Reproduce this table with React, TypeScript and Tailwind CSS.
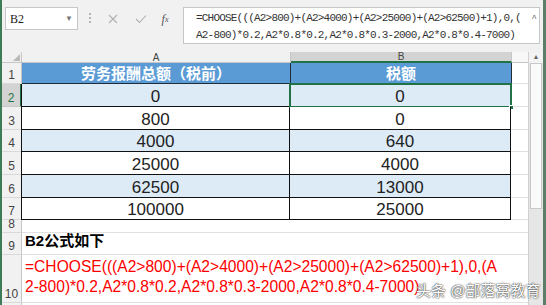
import React from 'react'

const rows = [
  { n: '2', a: '0', b: '0', shade: true },
  { n: '3', a: '800', b: '0', shade: false },
  { n: '4', a: '4000', b: '640', shade: true },
  { n: '5', a: '25000', b: '4000', shade: false },
  { n: '6', a: '62500', b: '13000', shade: true },
  { n: '7', a: '100000', b: '25000', shade: false },
]

const heights: Record<string, string> = {
  '2': 'h-[23px]',
  '3': 'h-[23px]',
  '4': 'h-[22px]',
  '5': 'h-[23px]',
  '6': 'h-[23px]',
  '7': 'h-[22px]',
}

function RowHead({ n, selected }: { n: string; selected?: boolean }) {
  return (
    <div
      className={
        selected
          ? 'w-[20px] shrink-0 flex items-end justify-center pb-[1px] bg-[#d3d3d3] border-r-2 border-r-[#217346] border-b border-b-[#c6c6c6] text-[12px] leading-[14px] text-[#217346]'
          : 'w-[20px] shrink-0 flex items-end justify-center pb-[1px] bg-[#f1f1f1] border-r border-r-[#c6c6c6] border-b border-b-[#d9d9d9] text-[12px] leading-[14px] text-[#444]'
      }
    >
      {n}
    </div>
  )
}

export default function App() {
  return (
    <div className="w-[546px] h-[305px] overflow-hidden flex bg-[#f1f1f1] font-['Liberation_Sans','Noto_Sans_CJK_SC',sans-serif]">
      <div className="w-[2px] shrink-0 bg-[#3f7b57]" />

      <div className="flex-1 flex flex-col min-w-0">
        {/* formula bar */}
        <div className="h-[52px] shrink-0 flex items-start pt-[7px]">
          <div className="ml-[3px] w-[73px] h-[23px] bg-white border border-[#c6c6c6] flex items-center justify-between pl-[4px] pr-[4px]">
            <span className="text-[12px] font-['Liberation_Serif','Noto_Sans_CJK_SC',serif] text-[#222]">B2</span>
            <span className="text-[8px] text-[#777]">▼</span>
          </div>
          <div className="ml-[10px] mt-[6px] w-[4px] flex flex-col items-center gap-[2px]">
            <span className="w-[2px] h-[2px] bg-[#b5b5b5]" />
            <span className="w-[2px] h-[2px] bg-[#b5b5b5]" />
            <span className="w-[2px] h-[2px] bg-[#b5b5b5]" />
          </div>
          <div className="ml-[7px] w-[28px] h-[23px] flex items-center justify-center text-[#b0b0b0]">
            <svg width="10" height="10" viewBox="0 0 10 10">
              <path d="M1 1 L9 9 M9 1 L1 9" stroke="currentColor" strokeWidth="1.1" />
            </svg>
          </div>
          <div className="w-[28px] h-[23px] flex items-center justify-center text-[#b0b0b0]">
            <svg width="12" height="10" viewBox="0 0 12 10">
              <path d="M1 5 L4.5 8.5 L11 1.5" stroke="currentColor" strokeWidth="1.1" fill="none" />
            </svg>
          </div>
          <div className="w-[20px] h-[23px] flex items-center justify-center text-[12px] italic font-['Liberation_Serif',serif] text-[#555]">
            f<span className="text-[8px] mt-[3px]">x</span>
          </div>
          <div className="ml-[8px] w-[357px] h-[37px] bg-white border border-[#c6c6c6] relative pl-[12px] pt-[2px] font-['Liberation_Mono','Noto_Sans_CJK_SC',monospace] text-[11px] leading-[17px] tracking-[-0.8px] text-[#333]">
            <div className="whitespace-nowrap">=CHOOSE(((A2&gt;800)+(A2&gt;4000)+(A2&gt;25000)+(A2&gt;62500)+1),0,(</div>
            <div className="whitespace-nowrap">A2-800)*0.2,A2*0.8*0.2,A2*0.8*0.3-2000,A2*0.8*0.4-7000)</div>
            <span className="absolute right-[3px] top-[3px] text-[9px] text-[#666]">^</span>
          </div>
        </div>

        {/* sheet */}
        <div className="flex-1 flex min-h-0 relative">
          <div className="flex-1 flex flex-col bg-white">
            {/* column headers */}
            <div className="h-[11px] flex shrink-0 bg-[#f1f1f1]">
              <div className="w-[20px] shrink-0 border-r border-b border-[#c6c6c6] flex items-end justify-end">
                <div className="w-0 h-0 border-l-[7px] border-l-transparent border-b-[7px] border-b-[#b9b9b9] mr-[1px] mb-[1px]" />
              </div>
              <div className="w-[269px] shrink-0 border-r border-b border-[#c6c6c6] flex items-center justify-center text-[10px] text-[#444]">A</div>
              <div className="w-[221px] shrink-0 bg-[#d3d3d3] border-r border-[#c6c6c6] border-b-2 border-b-[#217346] flex items-center justify-center text-[10px] text-[#444]">B</div>
              <div className="flex-1 bg-[#f7f7f7] border-b border-[#c6c6c6]" />
            </div>

            {/* row 1 */}
            <div className="h-[21px] flex shrink-0">
              <RowHead n="1" />
              <div className="w-[269px] shrink-0 bg-[#5b9bd5] border-r border-b border-[#1f2d3a] flex items-center justify-center pt-[2px] text-[15px] font-bold text-white">
                劳务报酬总额（税前）
              </div>
              <div className="w-[221px] shrink-0 bg-[#5b9bd5] border-r border-b border-[#1f2d3a] flex items-center justify-center pt-[2px] text-[15px] font-bold text-white">
                税额
              </div>
              <div className="flex-1 border-b border-[#e1e1e1]" />
            </div>

            {rows.map((r) => (
              <div key={r.n} className={`${heights[r.n]} flex shrink-0`}>
                <RowHead n={r.n} selected={r.n === '2'} />
                <div
                  className={`w-[269px] shrink-0 border-l border-r border-b border-[#111] -ml-[1px] flex items-center justify-center pt-[3px] text-[17px] text-[#222] ${r.shade ? 'bg-[#ddebf7]' : 'bg-white'}`}
                >
                  {r.a}
                </div>
                <div
                  className={`w-[221px] shrink-0 border-r border-b border-[#111] flex items-center justify-center pt-[3px] text-[17px] text-[#222] relative ${r.shade ? 'bg-[#ddebf7]' : 'bg-white'}`}
                >
                  {r.b}
                  {r.n === '2' && (
                    <>
                      <div className="absolute left-[-1px] right-[-2px] top-[-1px] bottom-[-2px] border-2 border-[#217346]" />
                      <div className="absolute right-[-4px] bottom-[-4px] w-[5px] h-[5px] bg-[#217346] border border-white" />
                    </>
                  )}
                </div>
                <div className="flex-1 border-b border-[#e1e1e1]" />
              </div>
            ))}

            {/* row 8 */}
            <div className="h-[13px] flex shrink-0">
              <RowHead n="8" />
              <div className="flex-1 border-b border-[#e1e1e1]" />
            </div>

            {/* row 9 */}
            <div className="h-[22px] flex shrink-0">
              <RowHead n="9" />
              <div className="flex-1 flex items-end pl-[3px] pb-[2px] border-b border-[#e1e1e1] text-[15px] font-bold text-black">
                B2公式如下
              </div>
            </div>

            {/* row 10 */}
            <div className="h-[48px] flex shrink-0">
              <RowHead n="10" />
              <div className="flex-1 pl-[3px] pt-[2px] text-[15.6px] leading-[20px] text-[#ff0000] border-b border-[#e1e1e1]">
                <div className="whitespace-nowrap">=CHOOSE(((A2&gt;800)+(A2&gt;4000)+(A2&gt;25000)+(A2&gt;62500)+1),0,(A</div>
                <div className="whitespace-nowrap">2-800)*0.2,A2*0.8*0.2,A2*0.8*0.3-2000,A2*0.8*0.4-7000)</div>
              </div>
            </div>
            <div className="flex-1 flex">
              <div className="w-[20px] bg-[#f1f1f1] border-r border-[#c6c6c6]" />
            </div>
          </div>

          {/* vertical scrollbar */}
          <div className="w-[15px] shrink-0 bg-[#e6e6e6] border-l border-[#d0d0d0] flex flex-col">
            <div className="h-[11px] flex items-center justify-center text-[7px] text-[#666] bg-[#f3f3f3]">▲</div>
            <div className="mx-[1px] h-[146px] bg-[#fafafa] border border-[#c8c8c8]" />
          </div>

          {/* watermark */}
          <div className="absolute left-[414px] top-[228px] whitespace-nowrap text-[15px] text-white [text-shadow:0_0_2px_#333,0_0_1px_#333]">
            头条 @部落窝教育
          </div>
        </div>
      </div>

      <div className="w-[3px] shrink-0 bg-[#5d7d68]" />
    </div>
  )
}
